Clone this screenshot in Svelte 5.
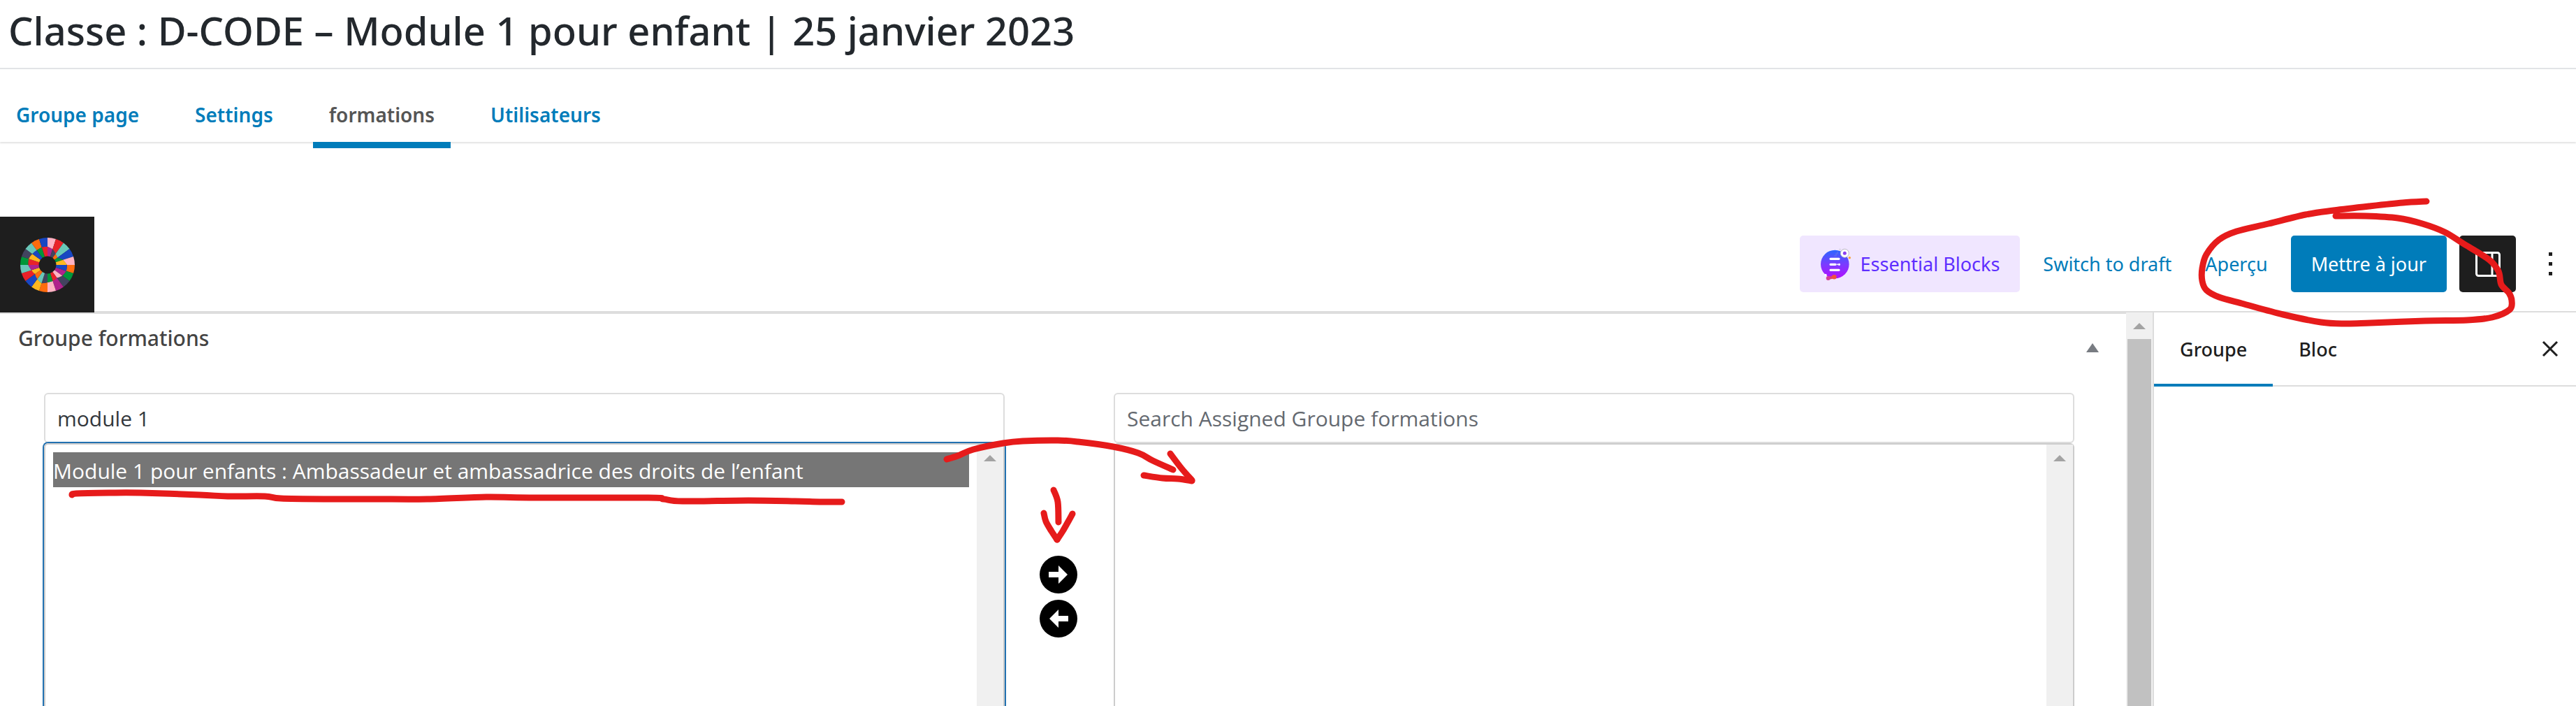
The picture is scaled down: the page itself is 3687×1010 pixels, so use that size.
<script lang="ts">
  type Point = [number, number];

  const page_tabs = ['Groupe page', 'Settings', 'formations', 'Utilisateurs'];
  let active_tab = $state('formations');

  const sidebar_tabs = ['Groupe', 'Bloc'];
  let active_sidebar = $state('Groupe');

  let left_search = $state('module 1');
  let right_search = $state('');

  let available = $state(['Module 1 pour enfants : Ambassadeur et ambassadrice des droits de l’enfant']);
  let assigned: string[] = $state([]);
  let left_selected: string[] = $state([...available]);
  let right_selected: string[] = $state([]);

  function assign() {
    assigned = [...assigned, ...left_selected];
    available = available.filter((item) => !left_selected.includes(item));
    left_selected = [];
  }

  function unassign() {
    available = [...available, ...right_selected];
    assigned = assigned.filter((item) => !right_selected.includes(item));
    right_selected = [];
  }

  // Logo wheel: 20 slices, each one split in an inner and an outer part
  const pink = '#ffb3c4';
  const red = '#e92229';
  const teal = '#6ac7b9';
  const blue = '#1846c2';
  const orange = '#ff6c0e';
  const green = '#009639';
  const navy = '#42435f';
  const purple = '#b0228c';
  const yellow = '#ffb71f';

  const outer_colors = [pink, red, teal, blue, pink, orange, green, navy, purple, pink,
    orange, yellow, blue, red, teal, green, navy, teal, orange, blue];
  const inner_colors = [purple, navy, orange, green, yellow, blue, purple, pink, red, green,
    navy, teal, orange, yellow, purple, red, yellow, blue, green, red];
  const splits = [77, 70, 58, 52, 69, 83, 84, 78, 68, 72, 74, 82, 74, 66, 72, 82, 84, 80, 77, 79];

  function polar(i: number, r: number) {
    const a = (i * Math.PI) / 10;
    return `${(r * Math.sin(a)).toFixed(1)} ${(-r * Math.cos(a)).toFixed(1)}`;
  }

  function slice(i: number, from: number[], to: number[]) {
    return `M${polar(i, from[0])}L${polar(i, to[0])}L${polar(i + 0.5, (to[0] + to[1]) / 2)}L${polar(i + 1, to[1])}L${polar(i + 1, from[1])}Z`;
  }

  const slices = outer_colors.flatMap((color, i) => {
    const split = [splits[i], splits[(i + 1) % 20]];
    return [
      { color, d: slice(i, split, [116, 116]) },
      { color: inner_colors[i], d: slice(i, [34, 34], split) }
    ];
  });

  // Hand drawn notes, smoothed through their points
  const notes: Point[][] = [
    [[3473, 288], [3439, 290], [3391, 295], [3340, 301], [3300, 307], [3247, 320], [3201, 331], [3176, 343], [3158, 364],
      [3152, 384], [3152, 402], [3158, 415], [3176, 425], [3212, 435], [3268, 450], [3322, 461], [3357, 463],
      [3393, 462], [3471, 459], [3531, 458], [3567, 454], [3592, 443], [3595, 430], [3591, 419], [3580, 407],
      [3576, 388], [3562, 371], [3525, 348], [3499, 332], [3467, 320], [3432, 312], [3386, 309], [3343, 309]],
    [[103, 708], [109, 706], [156, 705], [201, 705], [286, 708], [326, 710], [379, 710], [402, 713], [469, 714],
      [536, 714], [612, 714], [696, 711], [758, 712], [928, 712], [950, 714], [977, 717], [1071, 716], [1138, 717],
      [1173, 718], [1205, 718]],
    [[1355, 657], [1371, 652], [1393, 643], [1436, 634], [1464, 631], [1514, 630], [1543, 632], [1593, 639],
      [1629, 648], [1650, 659], [1679, 672]],
    [[1675, 649], [1691, 670], [1706, 687]],
    [[1706, 688], [1686, 685], [1664, 684], [1637, 680]],
    [[1508, 701], [1514, 718], [1515, 747]],
    [[1494, 734], [1497, 746], [1505, 760], [1513, 772]],
    [[1513, 772], [1521, 760], [1529, 746], [1535, 735]]
  ];

  function smooth(points: Point[]) {
    let d = `M${points[0]}`;
    for (let i = 0; i < points.length - 1; i++) {
      const p0 = points[i - 1] || points[i];
      const p1 = points[i];
      const p2 = points[i + 1];
      const p3 = points[i + 2] || p2;
      d += `C${p1[0] + (p2[0] - p0[0]) / 6},${p1[1] + (p2[1] - p0[1]) / 6} `;
      d += `${p2[0] - (p3[0] - p1[0]) / 6},${p2[1] - (p3[1] - p1[1]) / 6} ${p2}`;
    }
    return d;
  }
</script>

{#snippet scrollArrow()}
  <svg class="scroll-arrow" viewBox="0 0 18 9" aria-hidden="true"><path d="M0 9L9 0L18 9Z" fill="#a3a3a3" /></svg>
{/snippet}

<div class="page">
  <h1>Classe : D-CODE – Module 1 pour enfant | 25 janvier 2023</h1>

  <nav class="page-tabs">
    {#each page_tabs as tab}
      <a href="#{tab}" class:active={tab === active_tab} onclick={() => (active_tab = tab)}>{tab}</a>
    {/each}
  </nav>

  <header class="toolbar">
    <a class="logo" href="#home" aria-label="Accueil">
      <svg viewBox="-116 -116 232 232">
        {#each slices as s}
          <path d={s.d} fill={s.color} />
        {/each}
        <circle r="37" fill="#1e1e1e" />
      </svg>
    </a>
    <div class="actions">
      <button class="essential">
        <svg viewBox="0 0 46 46" aria-hidden="true">
          <defs>
            <linearGradient id="eb" x1="0" y1="0" x2="0" y2="1">
              <stop offset="0" stop-color="#2a66ff" />
              <stop offset="0.5" stop-color="#7a3cff" />
              <stop offset="1" stop-color="#b30dff" />
            </linearGradient>
          </defs>
          <circle cx="21.3" cy="23" r="20.3" fill="url(#eb)" />
          <path d="M20 11h3v-3h2v-3" fill="none" stroke="#5a6cf0" stroke-width="1.5" />
          <path d="M15 15.3h12M15 23.3h7M15 31.3h12" stroke="#fff" stroke-width="3.2" stroke-linecap="round" />
          <circle cx="24.7" cy="23.3" r="1" fill="#fff" />
          <circle cx="27.4" cy="23.3" r="1.6" fill="#fff" />
          <circle cx="28.5" cy="2" r="1.4" fill="#dcd6e8" />
          <circle cx="35.3" cy="7.3" r="6" fill="#fff" stroke="#b9b5c4" stroke-width="1" />
          <circle cx="35.3" cy="7.3" r="2.5" fill="#8a3ff0" />
          <circle cx="42.3" cy="13.7" r="1.7" fill="#f9a13a" />
          <circle cx="8" cy="38.3" r="1.6" fill="#fff" />
          <path d="M11.7 43L20.3 41.3" stroke="#e0456b" stroke-width="4" />
          <circle cx="11.7" cy="43" r="3" fill="#d63f97" />
          <circle cx="20.3" cy="41.3" r="3.3" fill="#f0533f" />
        </svg>
        Essential Blocks
      </button>
      <button class="link">Switch to draft</button>
      <button class="link">Aperçu</button>
      <button class="primary">Mettre à jour</button>
      <button class="toggle" aria-label="Réglages">
        <svg viewBox="0 0 36 36" fill="none" stroke="#fff" stroke-width="3">
          <rect x="1.5" y="1.5" width="33" height="33" rx="3" />
          <path d="M24 1V35" />
        </svg>
      </button>
      <button class="more" aria-label="Options">
        <svg viewBox="0 0 5 33" fill="#1e1e1e">
          <path d="M0 0h5v5H0zM0 14h5v5H0zM0 28h5v5H0z" />
        </svg>
      </button>
    </div>
  </header>

  <div class="workspace">
    <main>
      <div class="panel-head">
        <h2>Groupe formations</h2>
        <button class="collapse" aria-label="Replier">
          <svg viewBox="0 0 18 13"><path d="M0 13L9 0L18 13Z" fill="#787c82" /></svg>
        </button>
      </div>

      <div class="selector">
        <div class="column">
          <input type="text" aria-label="Search All Groupe formations" bind:value={left_search} />
          <div class="listbox focused">
            <select multiple aria-label="Formations disponibles" bind:value={left_selected}>
              {#each available as item}
                <option value={item}>{item}</option>
              {/each}
            </select>
            <div class="scroll-track">{@render scrollArrow()}</div>
          </div>
        </div>

        <div class="movers">
          <button aria-label="Ajouter" onclick={assign}>
            <svg viewBox="0 0 54 54">
              <circle cx="27" cy="27" r="27" />
              <path d="M13 23H27V14L40 27L27 40V31H13Z" fill="#fff" />
            </svg>
          </button>
          <button aria-label="Retirer" onclick={unassign}>
            <svg viewBox="0 0 54 54">
              <circle cx="27" cy="27" r="27" />
              <path d="M41 23H27V14L14 27L27 40V31H41Z" fill="#fff" />
            </svg>
          </button>
        </div>

        <div class="column">
          <input type="text" aria-label="Search Assigned Groupe formations" placeholder="Search Assigned Groupe formations" bind:value={right_search} />
          <div class="listbox">
            <select multiple aria-label="Formations assignées" bind:value={right_selected}>
              {#each assigned as item}
                <option value={item}>{item}</option>
              {/each}
            </select>
            <div class="scroll-track">{@render scrollArrow()}</div>
          </div>
        </div>
      </div>
    </main>

    <div class="scroll-track">
      {@render scrollArrow()}
      <div class="thumb"></div>
    </div>

    <aside>
      <div class="sidebar-tabs">
        {#each sidebar_tabs as tab}
          <button class:active={tab === active_sidebar} onclick={() => (active_sidebar = tab)}>{tab}</button>
        {/each}
        <button class="close" aria-label="Fermer">
          <svg viewBox="0 0 22 22" stroke="#1e1e1e" stroke-width="3"><path d="M1 1L21 21M21 1L1 21" /></svg>
        </button>
      </div>
    </aside>
  </div>

  <svg class="notes" aria-hidden="true">
    {#each notes as note}
      <path d={smooth(note)} />
    {/each}
  </svg>
</div>

<style>
  :global(body) {
    margin: 0;
    background: #fff;
  }
  .page, .page button {
    font-family: "Noto Sans", "Open Sans", sans-serif;
  }
  .page input, .page select {
    font-family: "Open Sans", "Noto Sans", sans-serif;
  }
  .page {
    position: relative;
    display: flex;
    flex-direction: column;
    height: 100vh;
    overflow: hidden;
    color: #1e1e1e;
  }
  svg {
    display: block;
    overflow: visible;
  }
  button {
    border: 0;
    padding: 0;
    margin: 0;
    background: none;
    color: inherit;
    cursor: pointer;
  }

  h1 {
    margin: 0;
    padding: 1px 12px 12px;
    font-size: 56px;
    font-weight: 500;
    line-height: 84px;
    color: #23282d;
    border-bottom: 2px solid #e2e4e7;
  }

  .page-tabs {
    display: flex;
    gap: 34px;
    margin-bottom: 107px;
    box-shadow: 0 2px 2px #e4e4e4;
  }
  .page-tabs a {
    position: relative;
    padding: 45px 23px 19px;
    font-size: 28px;
    font-weight: 600;
    line-height: 40px;
    color: #007cba;
    text-decoration: none;
  }
  .page-tabs a.active {
    color: #555;
  }
  .page-tabs a.active::after {
    content: "";
    position: absolute;
    left: 0;
    right: 0;
    top: 100%;
    height: 9px;
    background: #007cba;
  }

  .toolbar {
    display: flex;
    align-items: center;
    justify-content: space-between;
    height: 135px;
    border-bottom: 2px solid #ddd;
  }
  .logo {
    display: flex;
    align-items: center;
    justify-content: center;
    align-self: flex-start;
    width: 135px;
    height: 137px;
    background: #1e1e1e;
  }
  .logo svg {
    width: 78px;
    height: 78px;
  }
  .actions {
    display: flex;
    align-items: center;
    gap: 18px;
    padding-right: 6px;
  }
  .actions button {
    height: 81px;
    font-size: 27px;
    border-radius: 5px;
  }
  .essential {
    display: flex;
    align-items: center;
    gap: 12px;
    padding: 0 29px;
    background: #f0e6ff;
    color: #5e2eff;
  }
  .essential svg {
    width: 46px;
    height: 46px;
  }
  .link {
    padding: 0 15px;
    color: #007cba;
  }
  .primary {
    padding: 0 29px;
    background: #007cba;
    color: #fff;
  }
  .toggle, .more {
    display: flex;
    align-items: center;
    justify-content: center;
  }
  .toggle {
    width: 81px;
    background: #1e1e1e;
  }
  .toggle svg {
    width: 36px;
    height: 36px;
  }
  .more {
    width: 62px;
  }
  .more svg {
    width: 5px;
    height: 33px;
  }

  .workspace {
    display: flex;
    flex: 1;
    min-height: 0;
  }
  main {
    display: flex;
    flex-direction: column;
    flex: 1;
    min-width: 0;
    border-top: 2px solid #ddd;
  }
  .panel-head {
    display: flex;
    justify-content: space-between;
    align-items: flex-start;
    height: 113px;
    padding: 0 30px 0 26px;
  }
  h2 {
    margin: 0;
    font-size: 30px;
    font-weight: 500;
    line-height: 70px;
    color: #444;
  }
  .collapse {
    display: flex;
    align-items: center;
    justify-content: center;
    width: 36px;
    height: 96px;
  }
  .collapse svg {
    width: 18px;
    height: 13px;
  }

  .selector {
    display: grid;
    grid-template-columns: 1fr 156px 1fr;
    flex: 1;
    min-height: 0;
    padding: 0 74px 0 63px;
  }
  .column {
    display: flex;
    flex-direction: column;
    min-width: 0;
  }
  input {
    box-sizing: border-box;
    width: 100%;
    height: 72px;
    padding: 0 17px;
    border: 2px solid #ddd;
    border-radius: 6px;
    outline: 0;
    font-size: 30px;
    color: #32373c;
    background: #fff;
  }
  input::placeholder {
    color: #646970;
    opacity: 1;
  }
  .listbox {
    display: flex;
    flex: 1;
    border: 2px solid #ccc;
    border-bottom: 0;
    border-radius: 6px 6px 0 0;
  }
  .listbox.focused {
    box-shadow: 0 0 0 2px #2271b1;
  }
  select {
    flex: 1;
    min-width: 0;
    padding: 11px;
    border: 0;
    outline: 0;
    background: none;
    font-size: 30px;
    overflow: hidden;
    scrollbar-width: none;
  }
  option {
    box-sizing: border-box;
    height: 50px;
    padding: 6px 0 0;
    color: #32373c;
  }
  option:checked {
    background: #767676 linear-gradient(#767676, #767676);
    -webkit-text-fill-color: #fff;
  }

  .scroll-track {
    display: flex;
    flex-direction: column;
    align-items: center;
    width: 38px;
    padding-top: 15px;
    box-sizing: border-box;
    background: #f0f0f0;
  }
  .scroll-arrow {
    width: 18px;
    height: 9px;
  }
  .thumb {
    flex: 1;
    width: 34px;
    margin-top: 14px;
    background: #c1c1c1;
  }

  .movers {
    display: flex;
    flex-direction: column;
    align-items: center;
    gap: 9px;
    padding: 233px 3px 0 0;
  }
  .movers button, .movers svg {
    width: 54px;
    height: 54px;
  }

  aside {
    width: 604px;
    border-left: 2px solid #ddd;
  }
  .sidebar-tabs {
    display: flex;
    border-bottom: 2px solid #ddd;
  }
  .sidebar-tabs button {
    height: 104px;
    padding: 0 37px;
    font-size: 27px;
    font-weight: 500;
  }
  .sidebar-tabs button.active {
    box-shadow: inset 0 -2px #007cba, 0 2px #007cba;
  }
  .sidebar-tabs .close {
    margin-left: auto;
    padding: 0 26px;
  }
  .close svg {
    width: 22px;
    height: 22px;
  }

  .notes {
    position: absolute;
    top: 0;
    left: 0;
    width: 100%;
    height: 100%;
    pointer-events: none;
  }
  .notes path {
    fill: none;
    stroke: #e61b1b;
    stroke-width: 9px;
    stroke-linecap: round;
    stroke-linejoin: round;
  }
</style>
